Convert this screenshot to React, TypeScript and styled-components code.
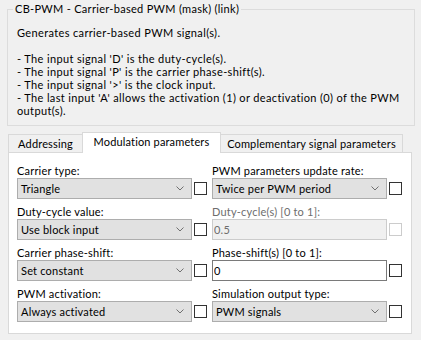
import React from "react";
import styled, { createGlobalStyle } from "styled-components";

const GlobalStyle = createGlobalStyle`
  html, body {
    margin: 0;
    padding: 0;
    background: #f0f0f0;
  }
  body {
    font-family: Lato, "Liberation Sans", sans-serif;
    font-size: 11px;
    letter-spacing: 0.2px;
    color: #000;
  }
`;

const Page = styled.div`
  width: 421px;
  height: 340px;
  box-sizing: border-box;
  padding: 2px 0 0 7px;
`;

const GroupBox = styled.fieldset`
  margin: 0;
  width: 408px;
  min-width: 0;
  box-sizing: border-box;
  border: 1px solid #dcdcdc;
  padding: 10px 9px 8px;
`;

const Title = styled.legend`
  margin-left: -4px;
  padding: 0 2px;
  line-height: 14px;
  letter-spacing: 0.3px;
`;

const Line = styled.div`
  line-height: 13px;
  height: 13px;
  letter-spacing: 0.36px;
  white-space: nowrap;
`;

const TabBar = styled.div`
  display: flex;
  align-items: flex-end;
  height: 20px;
  margin: 6px 0 0 1px;
`;

const Tab = styled.div<{ $active?: boolean; $w: number; $edge: "left" | "right" | "both" }>`
  position: relative;
  box-sizing: border-box;
  width: ${(p) => p.$w}px;
  height: ${(p) => (p.$active ? 21 : 18)}px;
  margin-bottom: ${(p) => (p.$active ? -1 : 0)}px;
  z-index: ${(p) => (p.$active ? 1 : 0)};
  background: ${(p) => (p.$active ? "#fff" : "#f0f0f0")};
  border-top: 1px solid #d9d9d9;
  border-left: ${(p) => (p.$edge !== "right" ? "1px solid #d9d9d9" : "none")};
  border-right: ${(p) => (p.$edge !== "left" ? "1px solid #d9d9d9" : "none")};
  padding-top: 2px;
  line-height: 14px;
  letter-spacing: 0.15px;
  text-align: center;
  white-space: nowrap;
`;

const Panel = styled.div`
  width: 404px;
  margin-left: 1px;
  box-sizing: border-box;
  border: 1px solid #d9d9d9;
  background: #fff;
  padding: 10px 8px 11px;
  display: grid;
  grid-template-columns: 190px 190px;
  column-gap: 5px;
  row-gap: 5px;
`;

const Field = styled.div`
  display: flex;
  flex-direction: column;
`;

const Label = styled.div<{ $disabled?: boolean }>`
  line-height: 15px;
  height: 15px;
  color: ${(p) => (p.$disabled ? "#6d6d6d" : "#000")};
  white-space: nowrap;
`;

const ControlRow = styled.div`
  display: flex;
  align-items: center;
  gap: 2px;
  height: 21px;
`;

const Combo = styled.div`
  width: 175px;
  height: 21px;
  box-sizing: border-box;
  border: 1px solid #adadad;
  background: #e1e1e1;
  padding: 0 7px 0 3px;
  display: flex;
  align-items: center;
  justify-content: space-between;
  white-space: nowrap;
`;

const TextBox = styled.input<{ $disabled?: boolean }>`
  width: 175px;
  height: 21px;
  margin: 0;
  box-sizing: border-box;
  border: 1px solid ${(p) => (p.$disabled ? "#cccccc" : "#7a7a7a")};
  background: ${(p) => (p.$disabled ? "#f0f0f0" : "#fff")};
  color: ${(p) => (p.$disabled ? "#6d6d6d" : "#000")};
  padding: 0 0 0 1px;
  font: inherit;
  letter-spacing: inherit;
  outline: none;
`;

const Check = styled.span<{ $disabled?: boolean }>`
  width: 13px;
  height: 13px;
  box-sizing: border-box;
  border: 1px solid ${(p) => (p.$disabled ? "#cccccc" : "#333333")};
  background: #fff;
  flex: none;
`;

const Chevron = () => (
  <svg width="8" height="5" viewBox="0 0 8 5">
    <path d="M0.5 0.5 L4 4 L7.5 0.5" fill="none" stroke="#707070" strokeWidth="1" />
  </svg>
);

type Item =
  | { label: string; kind: "combo"; value: string }
  | { label: string; kind: "text"; value: string; disabled?: boolean };

const leftItems: Item[] = [
  { label: "Carrier type:", kind: "combo", value: "Triangle" },
  { label: "Duty-cycle value:", kind: "combo", value: "Use block input" },
  { label: "Carrier phase-shift:", kind: "combo", value: "Set constant" },
  { label: "PWM activation:", kind: "combo", value: "Always activated" },
];

const rightItems: Item[] = [
  { label: "PWM parameters update rate:", kind: "combo", value: "Twice per PWM period" },
  { label: "Duty-cycle(s) [0 to 1]:", kind: "text", value: "0.5", disabled: true },
  { label: "Phase-shift(s) [0 to 1]:", kind: "text", value: "0" },
  { label: "Simulation output type:", kind: "combo", value: "PWM signals" },
];

const Param = ({ item }: { item: Item }) => {
  const disabled = item.kind === "text" && item.disabled;
  return (
    <Field>
      <Label $disabled={disabled}>{item.label}</Label>
      <ControlRow>
        {item.kind === "combo" ? (
          <Combo>
            <span>{item.value}</span>
            <Chevron />
          </Combo>
        ) : (
          <TextBox $disabled={disabled} value={item.value} readOnly disabled={disabled} />
        )}
        <Check $disabled={disabled} />
      </ControlRow>
    </Field>
  );
};

const description = [
  "Generates carrier-based PWM signal(s).",
  "",
  "- The input signal 'D' is the duty-cycle(s).",
  "- The input signal 'P' is the carrier phase-shift(s).",
  "- The input signal '>' is the clock input.",
  "- The last input 'A' allows the activation (1) or deactivation (0) of the PWM",
  "output(s).",
];

export default function App() {
  return (
    <Page>
      <GlobalStyle />
      <GroupBox>
        <Title>CB-PWM - Carrier-based PWM (mask) (link)</Title>
        {description.map((l, i) => (
          <Line key={i}>{l}</Line>
        ))}
      </GroupBox>
      <TabBar>
        <Tab $w={74} $edge="left">Addressing</Tab>
        <Tab $w={139} $edge="both" $active>
          Modulation parameters
        </Tab>
        <Tab $w={182} $edge="right">Complementary signal parameters</Tab>
      </TabBar>
      <Panel>
        {leftItems.map((it, i) => (
          <React.Fragment key={i}>
            <Param item={it} />
            <Param item={rightItems[i]} />
          </React.Fragment>
        ))}
      </Panel>
    </Page>
  );
}
